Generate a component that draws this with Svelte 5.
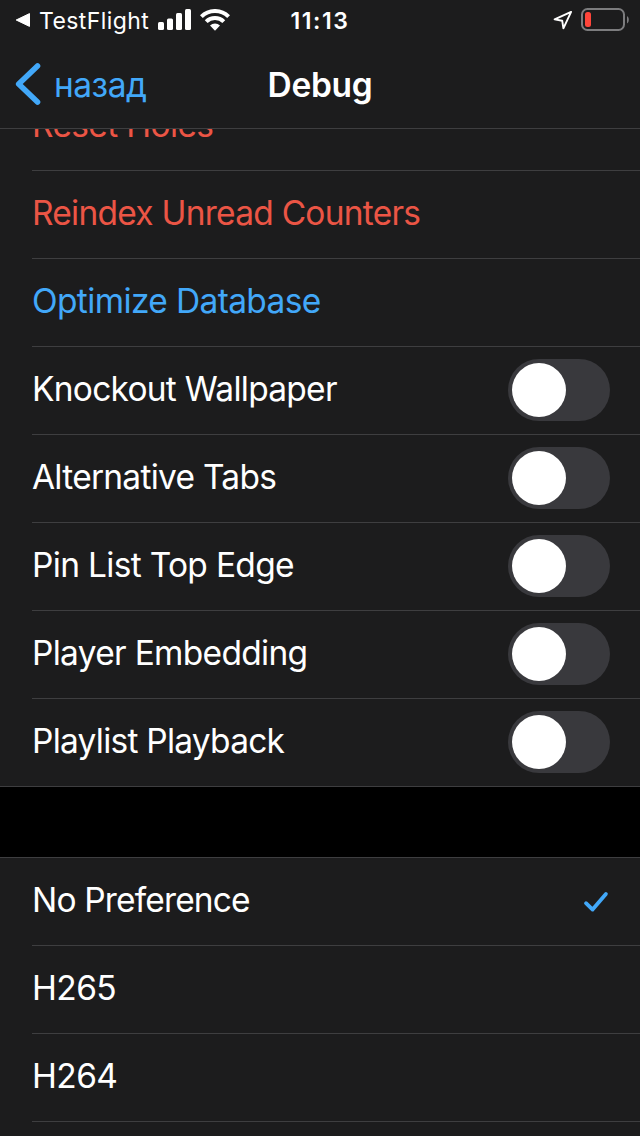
<script>
  // tracking is the letter spacing of the label, in px
  let actions = [
    { title: 'Reset Holes', tone: 'danger', tracking: -0.65 },
    { title: 'Reindex Unread Counters', tone: 'danger', tracking: -0.75 },
    { title: 'Optimize Database', tone: 'accent', tracking: -0.63 },
  ];

  let toggles = [
    { title: 'Knockout Wallpaper', on: false, tracking: -0.74 },
    { title: 'Alternative Tabs', on: false, tracking: -0.74 },
    { title: 'Pin List Top Edge', on: false, tracking: -0.69 },
    { title: 'Player Embedding', on: false, tracking: -0.7 },
    { title: 'Playlist Playback', on: false, tracking: -0.76 },
  ];

  let codecs = [
    { title: 'No Preference', tracking: -0.84 },
    { title: 'H265', tracking: -0.6 },
    { title: 'H264', tracking: -0.6 },
    { title: '', tracking: 0 },
  ];

  let selected = 'No Preference';
</script>

<div class="screen">
  <header class="header">
    <div class="status">
      <div class="status__left">
        <svg class="status__back" width="16" height="16" viewBox="0 0 16 16">
          <path d="M14.5 1.6v12.8L1.2 8z" fill="#fff" stroke="#fff" stroke-width="1" stroke-linejoin="round" />
        </svg>
        <span class="status__app">TestFlight</span>
        <svg class="status__signal" width="34" height="22" viewBox="0 0 34 22" fill="#fff">
          <rect x="0" y="13" width="6" height="8" rx="1.5" />
          <rect x="9" y="9.5" width="6" height="11.5" rx="1.5" />
          <rect x="18" y="4" width="6" height="17" rx="1.5" />
          <rect x="27" y="0" width="6" height="21" rx="1.5" />
        </svg>
        <svg class="status__wifi" width="30" height="22" viewBox="0 0 30 22">
          <g fill="none" stroke="#fff" stroke-width="4">
            <path d="M1.4 7.6a19.3 19.3 0 0 1 27.2 0" />
            <path d="M6.2 12.6a12.5 12.5 0 0 1 17.6 0" />
          </g>
          <path d="M10 16.6a7.2 7.2 0 0 1 10 0L15 21.8z" fill="#fff" />
        </svg>
      </div>
      <span class="status__time">11:13</span>
      <div class="status__right">
        <svg class="status__location" width="20" height="20" viewBox="0 0 20 20">
          <path d="M18.1 1.9L1.6 9.4l7.6 1.3 1.2 7.7z" fill="none" stroke="#fff" stroke-width="1.9" stroke-linejoin="round" />
        </svg>
        <svg class="status__battery" width="50" height="24" viewBox="0 0 50 24">
          <rect x="1" y="1" width="42" height="21" rx="5.5" fill="none" stroke="#7c7c7e" stroke-width="2" />
          <path d="M46 8v7.5c2.4-1.4 2.4-6.1 0-7.5z" fill="#7c7c7e" />
          <rect x="4" y="4" width="6" height="15" rx="2.5" fill="#ff453a" />
        </svg>
      </div>
    </div>
    <nav class="nav">
      <button class="nav__back" type="button">
        <svg width="26" height="44" viewBox="0 0 26 44">
          <path d="M22.5 4L3.7 22l18.8 18" fill="none" stroke="#42a8f9" stroke-width="5.6" stroke-linecap="round" stroke-linejoin="round" />
        </svg>
        <span class="nav__label">назад</span>
      </button>
      <h1 class="nav__title">Debug</h1>
      <span></span>
    </nav>
  </header>

  <main class="content">
    <section class="group group--scrolled">
      {#each actions as item}
        <div class="row">
          <span class="row__title row__title--{item.tone}" style="letter-spacing: {item.tracking}px">{item.title}</span>
        </div>
      {/each}
      {#each toggles as item}
        <div class="row">
          <span class="row__title" style="letter-spacing: {item.tracking}px">{item.title}</span>
          <button class="switch" class:switch--on={item.on} type="button" aria-label={item.title} on:click={() => (item.on = !item.on)}>
            <span class="switch__knob"></span>
          </button>
        </div>
      {/each}
    </section>

    <section class="group group--next">
      {#each codecs as item}
        <div class="row">
          <span class="row__title" style="letter-spacing: {item.tracking}px">{item.title}</span>
          {#if item.title === selected}
            <svg class="row__check" width="26" height="22" viewBox="0 0 26 22">
              <path d="M3 12.2l6.6 6.4L22.9 3" fill="none" stroke="#42a8f9" stroke-width="3.8" stroke-linecap="round" stroke-linejoin="round" />
            </svg>
          {/if}
        </div>
      {/each}
    </section>
  </main>
</div>

<style>
  :global(body) {
    background: #000;
  }

  .screen {
    background: #000;
    color: #fff;
    display: flex;
    flex-direction: column;
    font-family: Inter, 'Liberation Sans', sans-serif;
    height: 1136px;
    overflow: hidden;
    width: 640px;
  }

  .header {
    background: #1c1c1d;
    border-bottom: 1px solid #3e3e40;
    box-sizing: border-box;
    flex: none;
    height: 129px;
    position: relative;
    z-index: 1;
  }

  .status,
  .nav {
    align-items: center;
    display: grid;
    grid-template-columns: 1fr auto 1fr;
  }

  .status {
    height: 40px;
  }

  .status__left,
  .status__right {
    align-items: center;
    display: flex;
  }

  .status__left {
    padding-left: 15px;
  }

  .status__app {
    font-size: 23px;
    letter-spacing: 0.4px;
    line-height: 28px;
    margin-left: 8px;
    padding-top: 1px;
    width: 111px;
    white-space: nowrap;
  }

  .status__signal {
    margin-left: 8px;
  }

  .status__wifi {
    margin-left: 8px;
  }

  .status__time {
    font-size: 23px;
    font-weight: 600;
    letter-spacing: 1.6px;
    line-height: 28px;
    padding-top: 1px;
  }

  .status__right {
    justify-content: flex-end;
    padding-right: 9px;
  }

  .status__battery {
    margin-left: 8px;
  }

  .nav {
    height: 88px;
  }

  .nav__back {
    align-items: center;
    background: none;
    border: 0;
    color: #42a8f9;
    display: flex;
    font: inherit;
    gap: 13px;
    padding: 0 0 0 15px;
  }

  .nav__label {
    font-size: 33.5px;
    letter-spacing: -0.5px;
    line-height: 42px;
    padding-top: 1px;
  }

  .nav__title {
    font-size: 33.5px;
    font-weight: 600;
    letter-spacing: -0.3px;
    line-height: 42px;
    margin: 0;
    padding-top: 1px;
  }

  .content {
    flex: 1;
    min-height: 0;
  }

  .group {
    background: #1c1c1d;
  }

  .group--scrolled {
    margin-top: -46px;
  }

  .group--next {
    border-top: 1px solid #3e3e40;
    margin-top: 70px;
  }

  .row {
    align-items: center;
    background: linear-gradient(#3e3e40, #3e3e40) 32px 100% / 100% 1px no-repeat;
    box-sizing: border-box;
    display: flex;
    height: 88px;
    justify-content: space-between;
    padding: 0 30px 2px 32px;
  }

  .group--scrolled .row:last-child {
    background-position: 0 100%;
  }

  .row__title {
    font-size: 33.5px;
    line-height: 42px;
    padding-bottom: 2px;
    white-space: nowrap;
  }

  .row__title--danger {
    color: #eb5545;
  }

  .row__title--accent {
    color: #42a8f9;
  }

  .row__check {
    margin: 2px 1px 0 0;
  }

  .switch {
    background: #39393d;
    border: 0;
    border-radius: 31px;
    display: flex;
    flex: none;
    height: 62px;
    padding: 4px;
    width: 102px;
  }

  .switch--on {
    background: #42a8f9;
    justify-content: flex-end;
  }

  .switch__knob {
    background: #fff;
    border-radius: 50%;
    height: 54px;
    width: 54px;
  }
</style>
